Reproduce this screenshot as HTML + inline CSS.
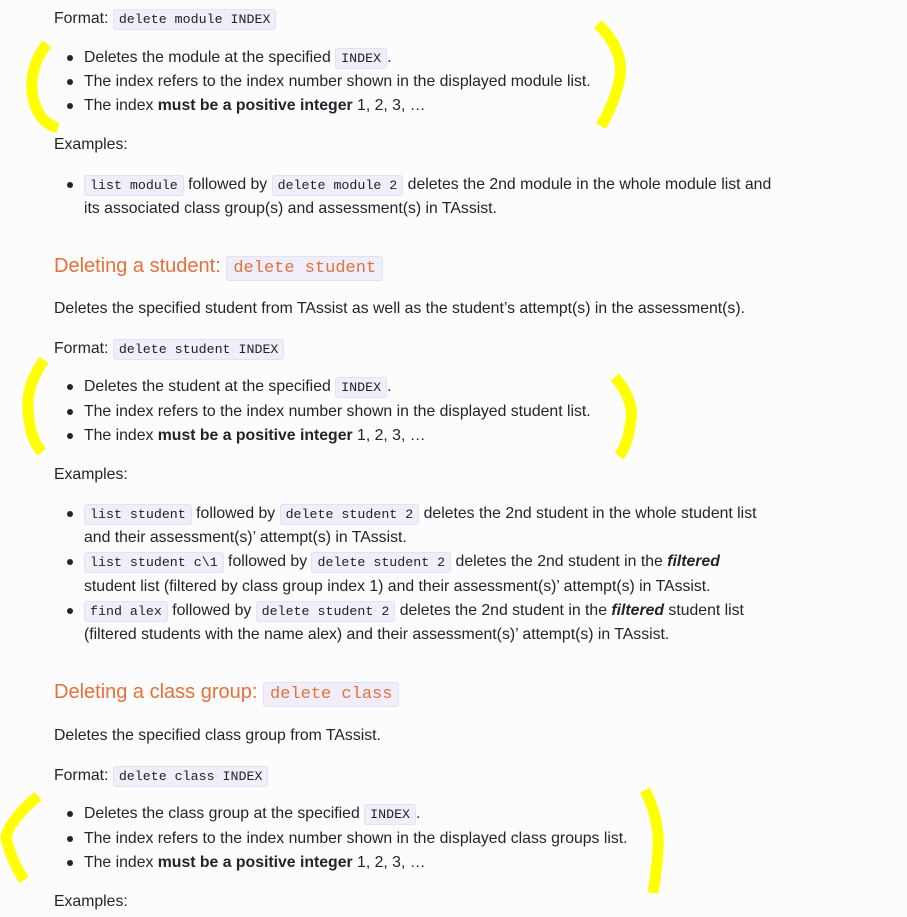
<!DOCTYPE html>
<html><head><meta charset="utf-8"><style>
body{margin:0;width:907px;height:917px;background:#fcfcfd;position:relative;overflow:hidden;font-family:"Liberation Sans",sans-serif;font-size:15.8px;color:#212529;}
.l{position:absolute;left:54px;white-space:nowrap;line-height:20px;margin-top:2px}
.b{left:84px}
.b::before{content:"";position:absolute;left:-17px;top:7px;width:6px;height:6px;border-radius:50%;background:#212529}
code{font-family:"Liberation Mono",monospace;font-size:13.3px;background:#efeefa;border:1px solid #e3e2f0;border-radius:3px;padding:2px 5px;color:#222;}
h3{position:absolute;left:54px;margin:0;font-weight:normal;font-size:20px;color:#e5703a;white-space:nowrap;line-height:26px}
h3 code{font-size:17px;color:#e5703a;padding:2px 6px}
svg{position:absolute;left:0;top:0}
</style></head><body>
<div class="l" style="top:7px">Format: <code>delete module INDEX</code></div>
<div class="l b" style="top:46px">Deletes the module at the specified <code>INDEX</code>.</div>
<div class="l b" style="top:70px">The index refers to the index number shown in the displayed module list.</div>
<div class="l b" style="top:94px">The index <b>must be a positive integer</b> 1, 2, 3, …</div>
<div class="l" style="top:133px">Examples:</div>
<div class="l b" style="top:173px"><code>list module</code> followed by <code>delete module 2</code> deletes the 2nd module in the whole module list and</div>
<div class="l" style="top:197px;left:84px">its associated class group(s) and assessment(s) in TAssist.</div>
<h3 style="top:253px">Deleting a student: <code>delete student</code></h3>
<div class="l" style="top:297px">Deletes the specified student from TAssist as well as the student’s attempt(s) in the assessment(s).</div>
<div class="l" style="top:337px">Format: <code>delete student INDEX</code></div>
<div class="l b" style="top:375px">Deletes the student at the specified <code>INDEX</code>.</div>
<div class="l b" style="top:400px">The index refers to the index number shown in the displayed student list.</div>
<div class="l b" style="top:424px">The index <b>must be a positive integer</b> 1, 2, 3, …</div>
<div class="l" style="top:463px">Examples:</div>
<div class="l b" style="top:502px"><code>list student</code> followed by <code>delete student 2</code> deletes the 2nd student in the whole student list</div>
<div class="l" style="top:526px;left:84px">and their assessment(s)’ attempt(s) in TAssist.</div>
<div class="l b" style="top:550px"><code>list student c\1</code> followed by <code>delete student 2</code> deletes the 2nd student in the <b><i>filtered</i></b></div>
<div class="l" style="top:575px;left:84px">student list (filtered by class group index 1) and their assessment(s)’ attempt(s) in TAssist.</div>
<div class="l b" style="top:599px"><code>find alex</code> followed by <code>delete student 2</code> deletes the 2nd student in the <b><i>filtered</i></b> student list</div>
<div class="l" style="top:623px;left:84px">(filtered students with the name alex) and their assessment(s)’ attempt(s) in TAssist.</div>
<h3 style="top:679px">Deleting a class group: <code>delete class</code></h3>
<div class="l" style="top:724px">Deletes the specified class group from TAssist.</div>
<div class="l" style="top:764px">Format: <code>delete class INDEX</code></div>
<div class="l b" style="top:802px">Deletes the class group at the specified <code>INDEX</code>.</div>
<div class="l b" style="top:827px">The index refers to the index number shown in the displayed class groups list.</div>
<div class="l b" style="top:851px">The index <b>must be a positive integer</b> 1, 2, 3, …</div>
<div class="l" style="top:890px">Examples:</div>
<svg width="907" height="917" fill="none" stroke="#ffff00" stroke-width="11" stroke-linecap="butt">
<path d="M47 44 Q30 65 32 92 Q36 122 58 128"/>
<path d="M598 24 Q624 50 620 77 Q615 102 601 126"/>
<path d="M44 360 Q26 385 28 410 Q30 440 42 452"/>
<path d="M615 377 Q634 400 631 420 Q628 445 619 456"/>
<path d="M38 796 Q8 822 6 838 Q12 862 24 880"/>
<path d="M645 790 Q660 820 658 850 Q656 875 653 893"/>
</svg>
</body></html>
